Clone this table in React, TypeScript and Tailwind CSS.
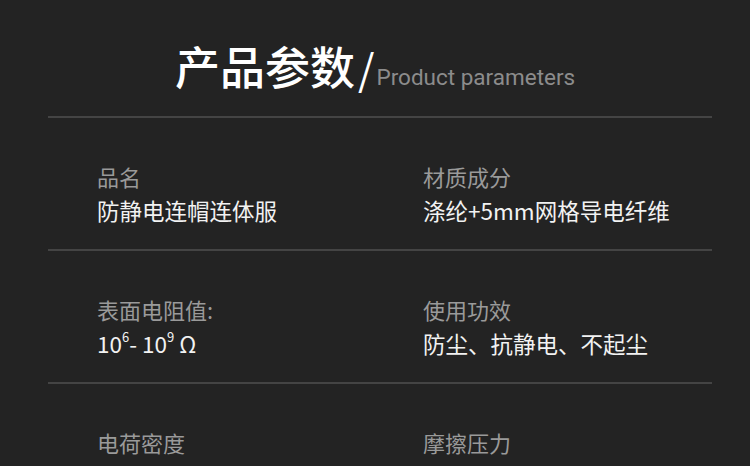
import React from 'react';

const font = { fontFamily: '"Noto Sans CJK SC", "Noto Sans", sans-serif' };

const Sup: React.FC<{ children: React.ReactNode }> = ({ children }) => (
  <sup className="relative -top-[3px] text-[13px] align-super leading-none">{children}</sup>
);

const App: React.FC = () => {
  const rows: { label: string; value: React.ReactNode }[][] = [
    [
      { label: '品名', value: '防静电连帽连体服' },
      { label: '材质成分', value: '涤纶+5mm网格导电纤维' },
    ],
    [
      {
        label: '表面电阻值:',
        value: (
          <span>
            10<Sup>6</Sup>- 10<Sup>9</Sup> Ω
          </span>
        ),
      },
      { label: '使用功效', value: '防尘、抗静电、不起尘' },
    ],
    [
      { label: '电荷密度', value: '' },
      { label: '摩擦压力', value: '' },
    ],
  ];

  return (
    <div className="w-[750px] h-[466px] overflow-hidden bg-[#232323]" style={font}>
      {/* Header */}
      <div className="h-[116px] flex items-baseline pl-[175px] pt-[38px]">
        <h1 className="text-[45px] leading-[56px] font-medium text-white">产品参数</h1>
        <span className="text-[42px] leading-none text-white font-normal ml-[3px]">/</span>
        <span className="text-[22.5px] text-[#8c8c8c] ml-[2px]" style={{ fontFamily: 'Roboto, sans-serif' }}>
          Product parameters
        </span>
      </div>

      {/* Params */}
      <div className="ml-[48px] mr-[38px]">
        {rows.map((row, i) => (
          <div key={i} className="h-[133px] border-t-2 border-[#444444] grid grid-cols-[326px_1fr] pl-[49px] pt-[43px]">
            {row.map((cell, j) => (
              <div key={j}>
                <div className="text-[22px] leading-[30px] text-[#9a9a9a]">{cell.label}</div>
                <div className="text-[22.5px] leading-[30px] mt-[4px] text-[#f2f2f2]">{cell.value}</div>
              </div>
            ))}
          </div>
        ))}
      </div>
    </div>
  );
};

export default App;
